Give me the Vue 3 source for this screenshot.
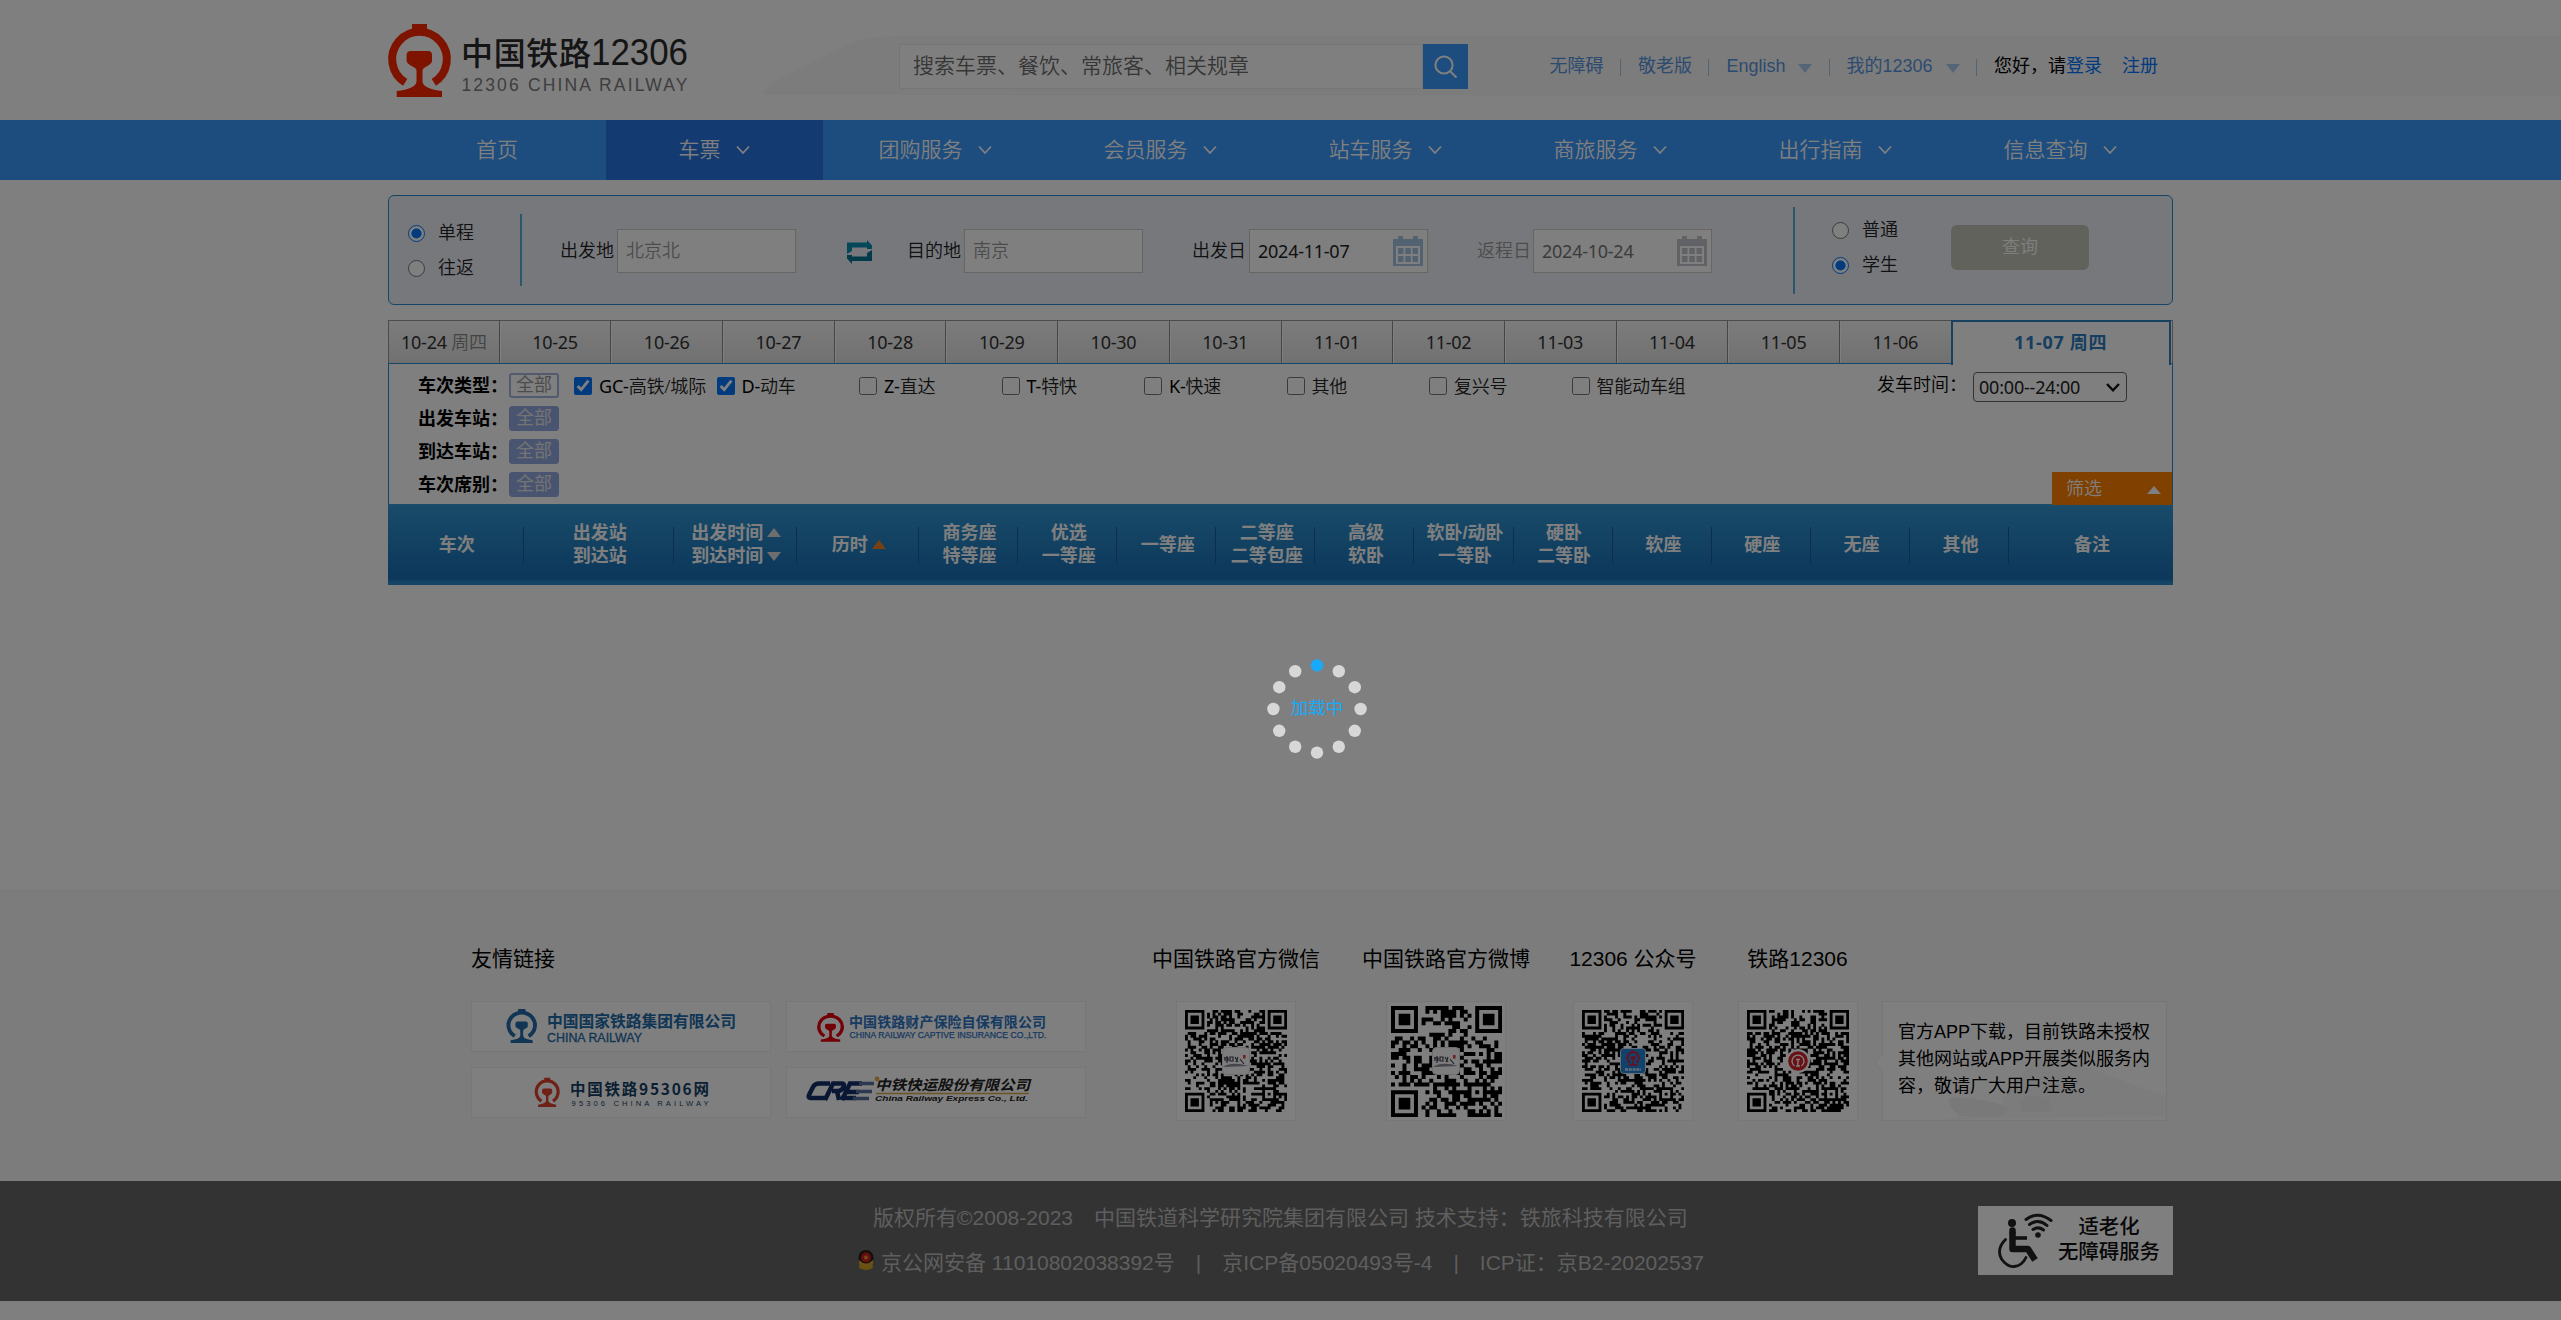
<script setup>
const navItems = ['团购服务', '会员服务', '站车服务', '商旅服务', '出行指南', '信息查询']
const dates = ['10-25', '10-26', '10-27', '10-28', '10-29', '10-30', '10-31', '11-01', '11-02', '11-03', '11-04', '11-05', '11-06']
const types = [
  { code: 'GC-', name: '高铁/城际', on: true },
  { code: 'D-', name: '动车', on: true },
  { code: 'Z-', name: '直达' },
  { code: 'T-', name: '特快' },
  { code: 'K-', name: '快速' },
  { code: '', name: '其他' },
  { code: '', name: '复兴号' },
  { code: '', name: '智能动车组' }
]
const filterRows = ['出发车站：', '到达车站：', '车次席别：']
const columns = [
  { w: 135.5, lines: ['车次'] },
  { w: 150.5, lines: ['出发站', '到达站'] },
  { w: 122.5, lines: ['出发时间', '到达时间'], sort: ['up', 'down'] },
  { w: 122.5, lines: ['历时'], sort: ['hot'] },
  { w: 99.1, lines: ['商务座', '特等座'] },
  { w: 99.1, lines: ['优选', '一等座'] },
  { w: 99.1, lines: ['一等座'] },
  { w: 99.1, lines: ['二等座', '二等包座'] },
  { w: 99.1, lines: ['高级', '软卧'] },
  { w: 99.1, lines: ['软卧/动卧', '一等卧'] },
  { w: 99.1, lines: ['硬卧', '二等卧'] },
  { w: 99.1, lines: ['软座'] },
  { w: 99.1, lines: ['硬座'] },
  { w: 99.1, lines: ['无座'] },
  { w: 99.1, lines: ['其他'] },
  { w: 163, lines: ['备注'] }
]

const emblemRing = 'M17.2 58.3A27.3 27.3 0 1 1 45.8 58.3'
const emblemRail = 'M24 0h15v8H24zM23 27H40Q44 27 44 31V37Q44 39 41 41L36 44Q34.5 45 34.5 47V58Q36 65 54 67V73H8.7V67Q27 65 28.5 58V47Q28.5 45 27 44L22 41Q18.6 39 18.6 37V31Q18.6 27 23 27Z'

function qrPath(n, seed) {
  let s = seed
  const rand = () => {
    s = (s * 1103515245 + 12345) % 2147483648
    return s / 2147483648
  }
  const finder = (x, y) => {
    const d = Math.max(Math.abs(x - 3), Math.abs(y - 3))
    return d === 3 || d <= 1
  }
  let d = ''
  for (let y = 0; y < n; y++) {
    for (let x = 0; x < n; x++) {
      let on = rand() > 0.5
      const fx = x < 8 ? x : x >= n - 8 ? n - 1 - x : -1
      const fy = y < 8 ? y : y >= n - 8 ? n - 1 - y : -1
      if (fx >= 0 && fy >= 0 && !(x >= n - 8 && y >= n - 8)) {
        on = fx < 7 && fy < 7 && finder(fx, fy)
      } else if (Math.abs(x - n + 7) <= 2 && Math.abs(y - n + 7) <= 2) {
        on = Math.max(Math.abs(x - n + 7), Math.abs(y - n + 7)) !== 1
      }
      if (on) d += `M${x} ${y}h1.04v1.04h-1.04z`
    }
  }
  return d
}
const codes = [
  { title: '中国铁路官方微信', w: 168, ml: 0, n: 37, size: 102, d: qrPath(37, 71), kind: 'ink' },
  { title: '中国铁路官方微博', w: 168, ml: 42, n: 29, size: 111, d: qrPath(29, 913), kind: 'ink' },
  { title: '12306 公众号', w: 126, ml: 40, n: 37, size: 102, d: qrPath(37, 337), kind: 'app' },
  { title: '铁路12306', w: 101, ml: 51, n: 37, size: 102, d: qrPath(37, 5501), kind: 'seal' }
]
const dots = Array.from({ length: 12 }, (_, i) => ({
  x: 50 + 43.6 * Math.sin((i * Math.PI) / 6),
  y: 50 - 43.6 * Math.cos((i * Math.PI) / 6)
}))
</script>

<template>
  <div class="page">
    <header class="header">
      <div class="header-band">
        <svg width="1798" height="60" viewBox="0 0 1798 60">
          <path d="M0 57Q0 52 8 47L84 9Q104 0 134 0H1798V60L4 59Q0 59 0 57Z" fill="#f8f8f8" />
        </svg>
      </div>
      <div class="wrap header-in">
        <svg class="logo" width="300" height="73" viewBox="0 0 300 73">
          <path :d="emblemRing" fill="none" stroke="#fc2700" stroke-width="8" />
          <path :d="emblemRail" fill="#fc2700" />
          <text x="73" y="40.5" font-size="32" font-weight="500" textLength="130" class="cjk" fill="#2a2a2a">中国铁路</text>
          <text x="203" y="41" font-size="36.5" textLength="97" lengthAdjust="spacingAndGlyphs" class="lat" fill="#2a2a2a">12306</text>
          <text x="73.5" y="67" font-size="17.5" textLength="226" class="lat" fill="#7c7c7c">12306 CHINA RAILWAY</text>
        </svg>
        <div class="search">
          <div class="search-input">搜索车票、餐饮、常旅客、相关规章</div>
          <div class="search-btn">
            <svg width="24" height="24" viewBox="0 0 24 24" fill="none" stroke="#fff" stroke-width="2">
              <circle cx="10" cy="10" r="8.6" /><path d="M16 16.2L22.5 22.5" />
            </svg>
          </div>
        </div>
        <nav class="links">
          <a>无障碍</a><i></i><a>敬老版</a><i></i><a>English</a><b></b><i class="i2"></i><a>我的12306</a><b></b><i></i>
          <span>您好，请</span><a class="strong">登录</a><a class="strong reg">注册</a>
        </nav>
      </div>
    </header>

    <nav class="nav">
      <div class="wrap nav-in">
        <div class="nav-item first">首页</div>
        <div class="nav-item active">车票
          <svg width="14" height="10" viewBox="0 0 14 10"><path d="M1 1.5L7 8L13 1.5" /></svg>
        </div>
        <div v-for="n in navItems" :key="n" class="nav-item">{{ n }}
          <svg width="14" height="10" viewBox="0 0 14 10"><path d="M1 1.5L7 8L13 1.5" /></svg>
        </div>
      </div>
    </nav>

    <section class="wrap query">
      <div class="radios trip">
        <label><input type="radio" name="trip" checked />单程</label>
        <label><input type="radio" name="trip" />往返</label>
      </div>
      <div class="vline"></div>
      <div class="field f1"><span>出发地</span><div class="box">北京北</div></div>
      <svg class="swap" width="25" height="24" viewBox="0 0 25 24">
        <path d="M0 14V2.5H20V0L25 5.5V9H20V7.5H5V11Z" fill="#0790b0" />
        <path d="M25 10V21H5V24L0 18.5V15H5V16.5H20V13Z" fill="#067796" />
      </svg>
      <div class="field f2"><span>目的地</span><div class="box">南京</div></div>
      <div class="field f3"><span>出发日</span>
        <div class="box date on">2024-11-07
          <svg width="30" height="30" viewBox="0 0 30 30" fill="#a5c4e0"><path fill-rule="evenodd" d="M0 3H5V0H10V3H20V0H25V3H30V30H0ZM3 10V28H27V10Z" /><path d="M5 12h5.5v6H5zM12.3 12h5.5v6h-5.5zM19.5 12H25v6h-5.5zM5 20h5.5v6H5zM12.3 20h5.5v6h-5.5zM19.5 20H25v6h-5.5z" /></svg>
        </div>
      </div>
      <div class="field f4 dim"><span>返程日</span>
        <div class="box date">2024-10-24
          <svg width="30" height="30" viewBox="0 0 30 30" fill="#c3c5cc"><path fill-rule="evenodd" d="M0 3H5V0H10V3H20V0H25V3H30V30H0ZM3 10V28H27V10Z" /><path d="M5 12h5.5v6H5zM12.3 12h5.5v6h-5.5zM19.5 12H25v6h-5.5zM5 20h5.5v6H5zM12.3 20h5.5v6h-5.5zM19.5 20H25v6h-5.5z" /></svg>
        </div>
      </div>
      <div class="vline tall"></div>
      <div class="radios who">
        <label><input type="radio" name="who" />普通</label>
        <label><input type="radio" name="who" checked />学生</label>
      </div>
      <div class="btn-query">查询</div>
    </section>

    <section class="wrap result">
      <div class="tabs">
        <div class="tab">10-24&nbsp;<em>周四</em></div>
        <div v-for="d in dates" :key="d" class="tab">{{ d }}</div>
        <div class="tab-on">11-07 周四</div>
      </div>
      <div class="filters">
        <div class="row">
          <strong>车次类型：</strong><span class="all off">全部</span>
          <div class="types">
            <label v-for="t in types" :key="t.name"><input type="checkbox" :checked="t.on" />{{ t.code }}<em>{{ t.name }}</em></label>
          </div>
          <span class="time-label">发车时间：</span>
          <div class="select">00:00--24:00
            <svg width="14" height="9" viewBox="0 0 14 9" fill="none" stroke="#111" stroke-width="2.4"><path d="M1 1L7 7.3L13 1" /></svg>
          </div>
        </div>
        <div v-for="r in filterRows" :key="r" class="row"><strong>{{ r }}</strong><span class="all">全部</span></div>
        <div class="filter-btn">筛选<i></i></div>
      </div>
      <div class="thead">
        <div v-for="(c, i) in columns" :key="i" class="th" :style="{ width: c.w + 'px' }">
          <div v-for="(l, j) in c.lines" :key="l" class="line">{{ l }}<i v-if="c.sort" :class="c.sort[j]"></i></div>
        </div>
      </div>
    </section>

    <footer class="footer">
      <div class="wrap foot-in">
        <div class="friends">
          <h3>友情链接</h3>
          <div class="cards">
            <svg width="300" height="51" viewBox="0 0 300 51">
              <g transform="translate(35.4 8) scale(.486 .466)"><path :d="emblemRing" fill="none" stroke="#226ba8" stroke-width="8" /><path :d="emblemRail" fill="#226ba8" /></g>
              <g fill="#226ba8" font-weight="700"><text x="76" y="25.5" font-size="15.8" textLength="189" class="cjk">中国国家铁路集团有限公司</text><text x="76" y="41" font-size="12.5" font-weight="400" stroke="#226ba8" stroke-width=".3" textLength="95" lengthAdjust="spacingAndGlyphs" class="lat">CHINA RAILWAY</text></g>
            </svg>
            <svg width="300" height="51" viewBox="0 0 300 51">
              <g transform="translate(31 12) scale(.43 .395)"><path :d="emblemRing" fill="none" stroke="#e6000e" stroke-width="8" /><path :d="emblemRail" fill="#e6000e" /></g>
              <g fill="#2c74c4" font-weight="700"><text x="63" y="26.3" font-size="14" textLength="197" class="cjk">中国铁路财产保险自保有限公司</text><text x="63.4" y="36.6" font-size="8.6" font-weight="400" stroke="#2c74c4" stroke-width=".25" textLength="197" lengthAdjust="spacingAndGlyphs" class="lat">CHINA RAILWAY CAPTIVE INSURANCE CO.,LTD.</text></g>
            </svg>
            <svg width="300" height="51" viewBox="0 0 300 51">
              <g transform="translate(63.6 10.7) scale(.4 .402)"><path :d="emblemRing" fill="none" stroke="#e0432c" stroke-width="8" /><path :d="emblemRail" fill="#e0432c" /></g>
              <g fill="#173e66"><text x="99" y="27.5" font-size="15.5" font-weight="700" textLength="139" class="cjk">中国铁路95306网</text><text x="100.6" y="39.3" font-size="7.6" textLength="137" class="lat">95306 CHINA RAILWAY</text></g>
            </svg>
            <svg width="300" height="51" viewBox="0 0 300 51">
              <g fill="none" stroke="#132f68" stroke-width="4.5"><path d="M44 16.5H33Q29 16.5 27 20L23 28Q21.5 31 25 31H39" /><path d="M39 33L47 16.5H56Q59 16.5 57.5 20Q56.5 23 53 24H46M51 24L53 33M56 33L64 16.5H76M59 25H73M55 31H70" /></g>
              <g stroke="#5970a0" stroke-width="3.6"><path d="M73 16.5H88M70 24.5H86M67 31.5H83" /></g>
              <circle cx="91" cy="12" r="2.4" fill="#e2ab52" />
              <path d="M90 26.5H243" stroke="#d9a94a" stroke-width="1.3" />
              <g fill="#222" font-style="italic" font-weight="700"><text x="89" y="23" font-size="14" textLength="155" lengthAdjust="spacingAndGlyphs" class="cjk">中铁快运股份有限公司</text><text x="89" y="33.5" font-size="7.4" textLength="153" lengthAdjust="spacingAndGlyphs" class="lat">China Railway Express Co., Ltd.</text></g>
            </svg>
          </div>
        </div>
        <div class="codes">
          <div v-for="c in codes" :key="c.title" class="code" :style="{ width: c.w + 'px', marginLeft: c.ml + 'px' }">
            <h3>{{ c.title }}</h3>
            <div class="qr">
              <svg :width="c.size" :height="c.size" :viewBox="`0 0 ${c.n} ${c.n}`"><path :d="c.d" fill="#000" /></svg>
              <svg v-if="c.kind === 'ink'" class="mark" width="28" height="28" viewBox="0 0 28 28">
                <rect x=".5" y=".5" width="27" height="27" rx="4" fill="#fafafa" stroke="#ddd" />
                <path d="M3 10v4M2 11h4v3M8 10h3v4H8zM13 10l3 5M16 10l-2 5M18 12l4 5M5 9v7" stroke="#445" stroke-width="1.2" fill="none" />
                <path d="M1 20Q10 14 26 19Z" fill="#889" /><rect x="21" y="8" width="2.6" height="3.6" fill="#d44" />
              </svg>
              <svg v-else-if="c.kind === 'app'" class="mark" width="26" height="26" viewBox="0 0 26 26">
                <rect x=".5" y=".5" width="25" height="25" rx="3" fill="#2384d6" stroke="#cde" />
                <g transform="translate(6.5 2.5) scale(.21)"><path :d="emblemRing" fill="none" stroke="#d2203a" stroke-width="9" /><path :d="emblemRail" fill="#d2203a" /></g>
                <path d="M5 21.5H21" stroke="#bfe0ff" stroke-width="2.4" stroke-dasharray="3 .8" />
              </svg>
              <svg v-else class="mark" width="24" height="24" viewBox="0 0 24 24">
                <circle cx="12" cy="12" r="12" fill="#fff" /><circle cx="12" cy="12" r="9.8" fill="#d2232a" />
                <path d="M8.5 17A6 6 0 1 1 15.5 17M12 10V17M10 17H14M10 10.5H14" stroke="#fff" stroke-width="1.4" fill="none" />
              </svg>
            </div>
          </div>
          <div class="notice">
            <svg class="train" width="226" height="70" viewBox="0 0 226 70" fill="#f3f3f3"><path d="M0 70Q30 64 60 66L62 50Q90 10 110 0Q160 24 226 46V66L70 68Z" opacity=".55" /><path d="M10 48Q40 46 70 58L60 66H20Q6 56 10 48ZM80 50Q90 42 110 48L112 62H82Z" /></svg>
            <svg class="notch" width="9" height="18" viewBox="0 0 9 18"><path d="M9 0L1 9L9 18" fill="#fff" stroke="#ececec" /></svg>
            <p>官方APP下载，目前铁路未授权其他网站或APP开展类似服务内容，敬请广大用户注意。</p>
          </div>
        </div>
      </div>
      <div class="copy">
        <div class="copy-text">
          <p>版权所有©2008-2023<s></s>中国铁道科学研究院集团有限公司 技术支持：铁旅科技有限公司</p>
          <p>
            <svg width="18" height="20" viewBox="0 0 18 20"><path d="M3 12H15L16 18Q9 22 2 18Z" fill="#d2a21e" /><ellipse cx="9" cy="8" rx="7.6" ry="8" fill="#2a1c12" /><circle cx="9" cy="7.5" r="5" fill="#c8201c" /><circle cx="9" cy="7.5" r="2" fill="#f08a2c" /><path d="M2 10Q9 17 16 10V14Q9 19 2 14Z" fill="#d6a62e" /></svg><span>京公网安备 11010802038392号</span><u>|</u><span>京ICP备05020493号-4</span><u>|</u><span>ICP证：京B2-20202537</span>
          </p>
        </div>
        <div class="care">
          <svg width="57" height="56" viewBox="0 0 57 56" fill="none" stroke="#222" stroke-linecap="round">
            <circle cx="15" cy="10" r="4" fill="#222" stroke="none" />
            <path d="M15.5 19V36H31L38 47" stroke-width="6.5" stroke-linejoin="round" stroke-linecap="butt" /><path d="M15.5 17.5V19" stroke-width="6.5" /><path d="M18 25H30" stroke-width="3.6" stroke-linecap="butt" />
            <path d="M8.5 26.5Q-1 36 4.5 46Q10 54 17 53.5Q25 53 29 44.5" stroke-width="2.8" />
            <path d="M29 6.5Q41 -2.5 54 7.5M32.5 11.5Q41.5 5 50 12.5M36 16.5Q41.5 13 46.5 17" stroke-width="3" />
            <circle cx="41" cy="22" r="2.8" fill="#222" stroke="none" />
          </svg>
          <div>适老化<br />无障碍服务</div>
        </div>
      </div>
    </footer>

    <div class="overlay"></div>
    <div class="loading">
      <svg width="100" height="100" viewBox="0 0 100 100"><circle v-for="(p, i) in dots" :key="i" :cx="p.x" :cy="p.y" r="6.2" :fill="i ? '#d7d7d7' : '#17aafb'" /></svg>
      <span>加载中</span>
    </div>
  </div>
</template>

<style>
body { margin: 0; background: #fff; }
</style>

<style scoped>
* { box-sizing: border-box; }
.page { position: relative; width: 2561px; height: 1320px; overflow: hidden; background: #fff; color: #000; font: 18px/1.5 "Liberation Sans", "Noto Sans CJK SC", sans-serif; white-space: nowrap; }
.page em { font-style: normal; }
.page h3, .page p { margin: 0; font-weight: 400; }
.page svg { flex: none; display: block; }
.cjk { font-family: "Noto Sans CJK SC", sans-serif; }
.lat { font-family: "Liberation Sans", sans-serif; }
.wrap { width: 1785px; margin-left: 388px; }

.header { position: relative; height: 120px; }
.header-band { position: absolute; left: 763px; top: 36px; }
.header-in { position: relative; display: flex; height: 120px; }
.logo { margin-top: 24px; overflow: visible; }
.search { display: flex; margin: 44px 0 0 211px; height: 45px; }
.search-input { width: 524px; border: 1px solid #ececec; background: #fff; padding-left: 13px; font-size: 21px; line-height: 41px; color: #6c6c6c; font-weight: 350; }
.search-btn { width: 45px; background: #3b99fc; display: flex; align-items: center; justify-content: center; }
.links { display: flex; align-items: center; height: 45px; margin: 44px 15px 0 auto; color: #5a96e0; }
.links i { width: 1px; height: 17px; background: #a8c8e6; margin: 1px 17px 0 16.5px; }
.links .i2 { margin-right: 16.5px; }
.links b { border: 7px solid transparent; border-top: 9px solid #a8cbee; border-bottom: 0; margin: 3px 0 0 13px; }
.links span { color: #000; }
.links .strong { color: #0077ff; }
.links .reg { margin-left: 20px; }

.nav { background: #3b99fc; height: 60px; }
.nav-in { display: flex; height: 60px; }
.nav-item { width: 225px; display: flex; align-items: center; justify-content: center; color: #fff; font-size: 21px; line-height: 58px; font-weight: 350; }
.nav-item svg { margin: 0 1px 0 15px; fill: none; stroke: #fff; stroke-width: 1.8; }
.nav-item.first { width: 218px; }
.nav-item.active { width: 217px; background: #2676e3; }

.query { display: flex; align-items: flex-start; height: 110px; margin-top: 15px; background: #eef1f8; border: 1px solid #298cce; border-radius: 6px; font-weight: 350; color: #222; }
.radios { display: flex; flex-direction: column; gap: 9px; }
.radios label { display: flex; align-items: center; height: 26px; line-height: 26px; }
.radios input { width: 19px; height: 19px; margin: 1px 13px 0 1px; }
.trip { margin: 24px 0 0 18px; width: 67px; }
.who { margin: 21px 0 0 36px; width: 67px; }
.vline { width: 2px; height: 72px; background: #59acd6; margin: 18px 0 0 46px; }
.vline.tall { height: 87px; margin: 11px 0 0 81px; }
.field { display: flex; align-items: center; height: 44px; margin-top: 33px; }
.field span { width: 57px; }
.f1 { margin-left: 38px; }
.f3 { margin-left: 49px; }
.f4 { margin-left: 49px; }
.f4 span { width: 56px; }
.dim { color: #999; }
.box { display: flex; align-items: center; justify-content: space-between; width: 179px; height: 44px; border: 1px solid #cfcdc7; background: #fff; color: #999; padding: 0 4px 0 8px; }
.date { font-family: "Noto Sans", "Noto Sans CJK SC", sans-serif; letter-spacing: -0.25px; font-weight: 400; color: #777; }
.date.on { color: #222; }
.swap { margin: 44px 35px 0 51px; }
.btn-query { width: 138px; height: 45px; margin: 29px 0 0 53px; background: #c2c4b8; border-radius: 6px; color: #fff; text-align: center; line-height: 45px; }

.result { margin-top: 15px; }
.tabs { display: flex; height: 44px; border: 1px solid #999; border-bottom: 1px solid #298cce; font-family: "Noto Sans", "Noto Sans CJK SC", sans-serif; }
.tab { width: 111.7px; border-right: 1px solid #8c8c8c; box-shadow: inset 1px 0 #fff; background: linear-gradient(#f8f8f8, #e2e2e2); text-align: center; line-height: 43px; color: #333; letter-spacing: -0.25px; }
.tab:first-child { box-shadow: none; width: 110.7px; }
.tab em { color: #888; font-weight: 350; }
.tab-on { width: 220px; height: 45px; margin: -1px 0 0 -1px; border: 2px solid #2c84bf; border-bottom: 0; background: #fff; text-align: center; line-height: 40px; font-weight: 700; color: #2c7cc0; z-index: 1; letter-spacing: 0.7px; }
.filters { position: relative; height: 140px; padding: 5px 0 0 29px; border: 1px solid #298cce; border-width: 0 1px; }
.row { display: flex; align-items: center; height: 33px; }
.row strong { width: 91px; line-height: 30px; font-weight: 700; }
.all { width: 50px; height: 25px; line-height: 22px; border-radius: 3px; background: #93aae0; border: 1px solid #93aae0; color: #e8e8e8; text-align: center; }
.all.off { background: #fff; border: 2px solid #a5b6dc; line-height: 20px; color: #999; }
.types { display: flex; margin-left: 15px; font-family: "Noto Sans", "Noto Sans CJK SC", sans-serif; }
.types label { display: flex; align-items: center; width: 142.5px; height: 30px; line-height: 28px; letter-spacing: -0.2px; }
.types em { font-weight: 350; color: #222; }
.types input { width: 18px; height: 18px; margin: 1px 7px 0 0; }
.time-label { margin-left: 163px; width: 96px; font-weight: 350; }
.select { display: flex; align-items: center; justify-content: space-between; width: 154px; height: 30px; margin-top: 3px; padding: 0 6px 0 5px; border: 1px solid #666; border-radius: 4px; background: #fff; font-family: "Noto Sans", sans-serif; color: #222; letter-spacing: -0.2px; }
.filter-btn { position: absolute; right: 0; bottom: 0; z-index: 1; width: 120px; height: 33px; margin-bottom: -1px; background: #ff8000; color: #fff; padding: 0 11px 0 14px; line-height: 32px; display: flex; align-items: center; justify-content: space-between; font-weight: 350; }
.filter-btn i { border: 7px solid transparent; border-bottom: 8px solid #fff; border-top: 0; margin-top: 2px; }
.thead { display: flex; align-items: center; height: 81px; padding: 1px 0 0; background: linear-gradient(#389cda, #3296d2 3%, #186fb6 92%, #298cce 97%); color: #fff; font-weight: 700; }
.th { display: flex; flex-direction: column; align-items: center; justify-content: center; height: 37px; padding-left: 3px; border-right: 1px solid #1c5a96; line-height: 23px; }
.th:last-child { border: 0; }
.line { display: flex; align-items: center; height: 23px; }
.line i { border: 7.5px solid transparent; margin-left: 4px; }
.line .up, .line .hot { border-bottom: 9px solid #ddd; border-top: 0; margin-top: -2px; }
.line .hot { border-bottom-color: #f08020; }
.line .down { border-top: 9px solid #ddd; border-bottom: 0; }

.footer { margin-top: 304px; background: #f8f8f8; }
.foot-in { display: flex; height: 292px; }
.friends { margin: 53px 0 0 83px; width: 615px; }
.footer h3 { font-size: 21px; line-height: 34px; font-weight: 400; }
.cards { display: grid; grid-template-columns: 300px 300px; gap: 15px; margin-top: 25px; }
.cards svg { background: #fff; box-shadow: inset 0 0 0 1px #eee; }
.codes { display: flex; margin: 53px 0 0 66px; }
.code { display: flex; flex-direction: column; align-items: center; }
.qr { position: relative; display: flex; align-items: center; justify-content: center; width: 120px; height: 120px; margin-top: 25px; background: #fff; border: 1px solid #eee; }
.mark { position: absolute; left: 50%; top: 50%; transform: translate(-50%, -50%); }
.notice { position: relative; width: 285px; height: 120px; margin: 59px 0 0 34px; border: 1px solid #ececec; background: #fff; }
.notice p { position: relative; margin: 17px 15px; white-space: normal; line-height: 27px; word-break: break-all; }
.train { position: absolute; right: 0; bottom: 0; }
.notch { position: absolute; left: -9px; top: 52px; }
.copy { position: relative; display: flex; justify-content: center; height: 120px; background: #666; color: #bdbdbd; font-size: 21px; }
.copy-text { display: flex; flex-direction: column; align-items: center; padding-top: 14px; }
.copy-text p { display: flex; align-items: center; height: 45px; line-height: 45px; white-space: pre; }
.copy-text s { width: 21px; }
.copy-text svg { margin: -6px 6px 0 0; }
.copy-text u { text-decoration: none; margin: 0 21px; }
.care { position: absolute; left: 1978px; top: 25px; width: 195px; height: 69px; display: flex; align-items: center; padding-left: 19px; background: #fff; color: #111; font-size: 20.4px; line-height: 25px; font-weight: 500; text-align: center; }
.care div { margin: -2px 0 0 4px; }

.overlay { position: absolute; inset: 0; z-index: 5; background: rgba(0, 0, 0, 0.5); }
.loading { position: absolute; left: 1267px; top: 659px; z-index: 6; width: 100px; height: 100px; }
.loading span { position: absolute; inset: 0; text-align: center; line-height: 98px; font-size: 17.5px; color: #17aafb; }
</style>
